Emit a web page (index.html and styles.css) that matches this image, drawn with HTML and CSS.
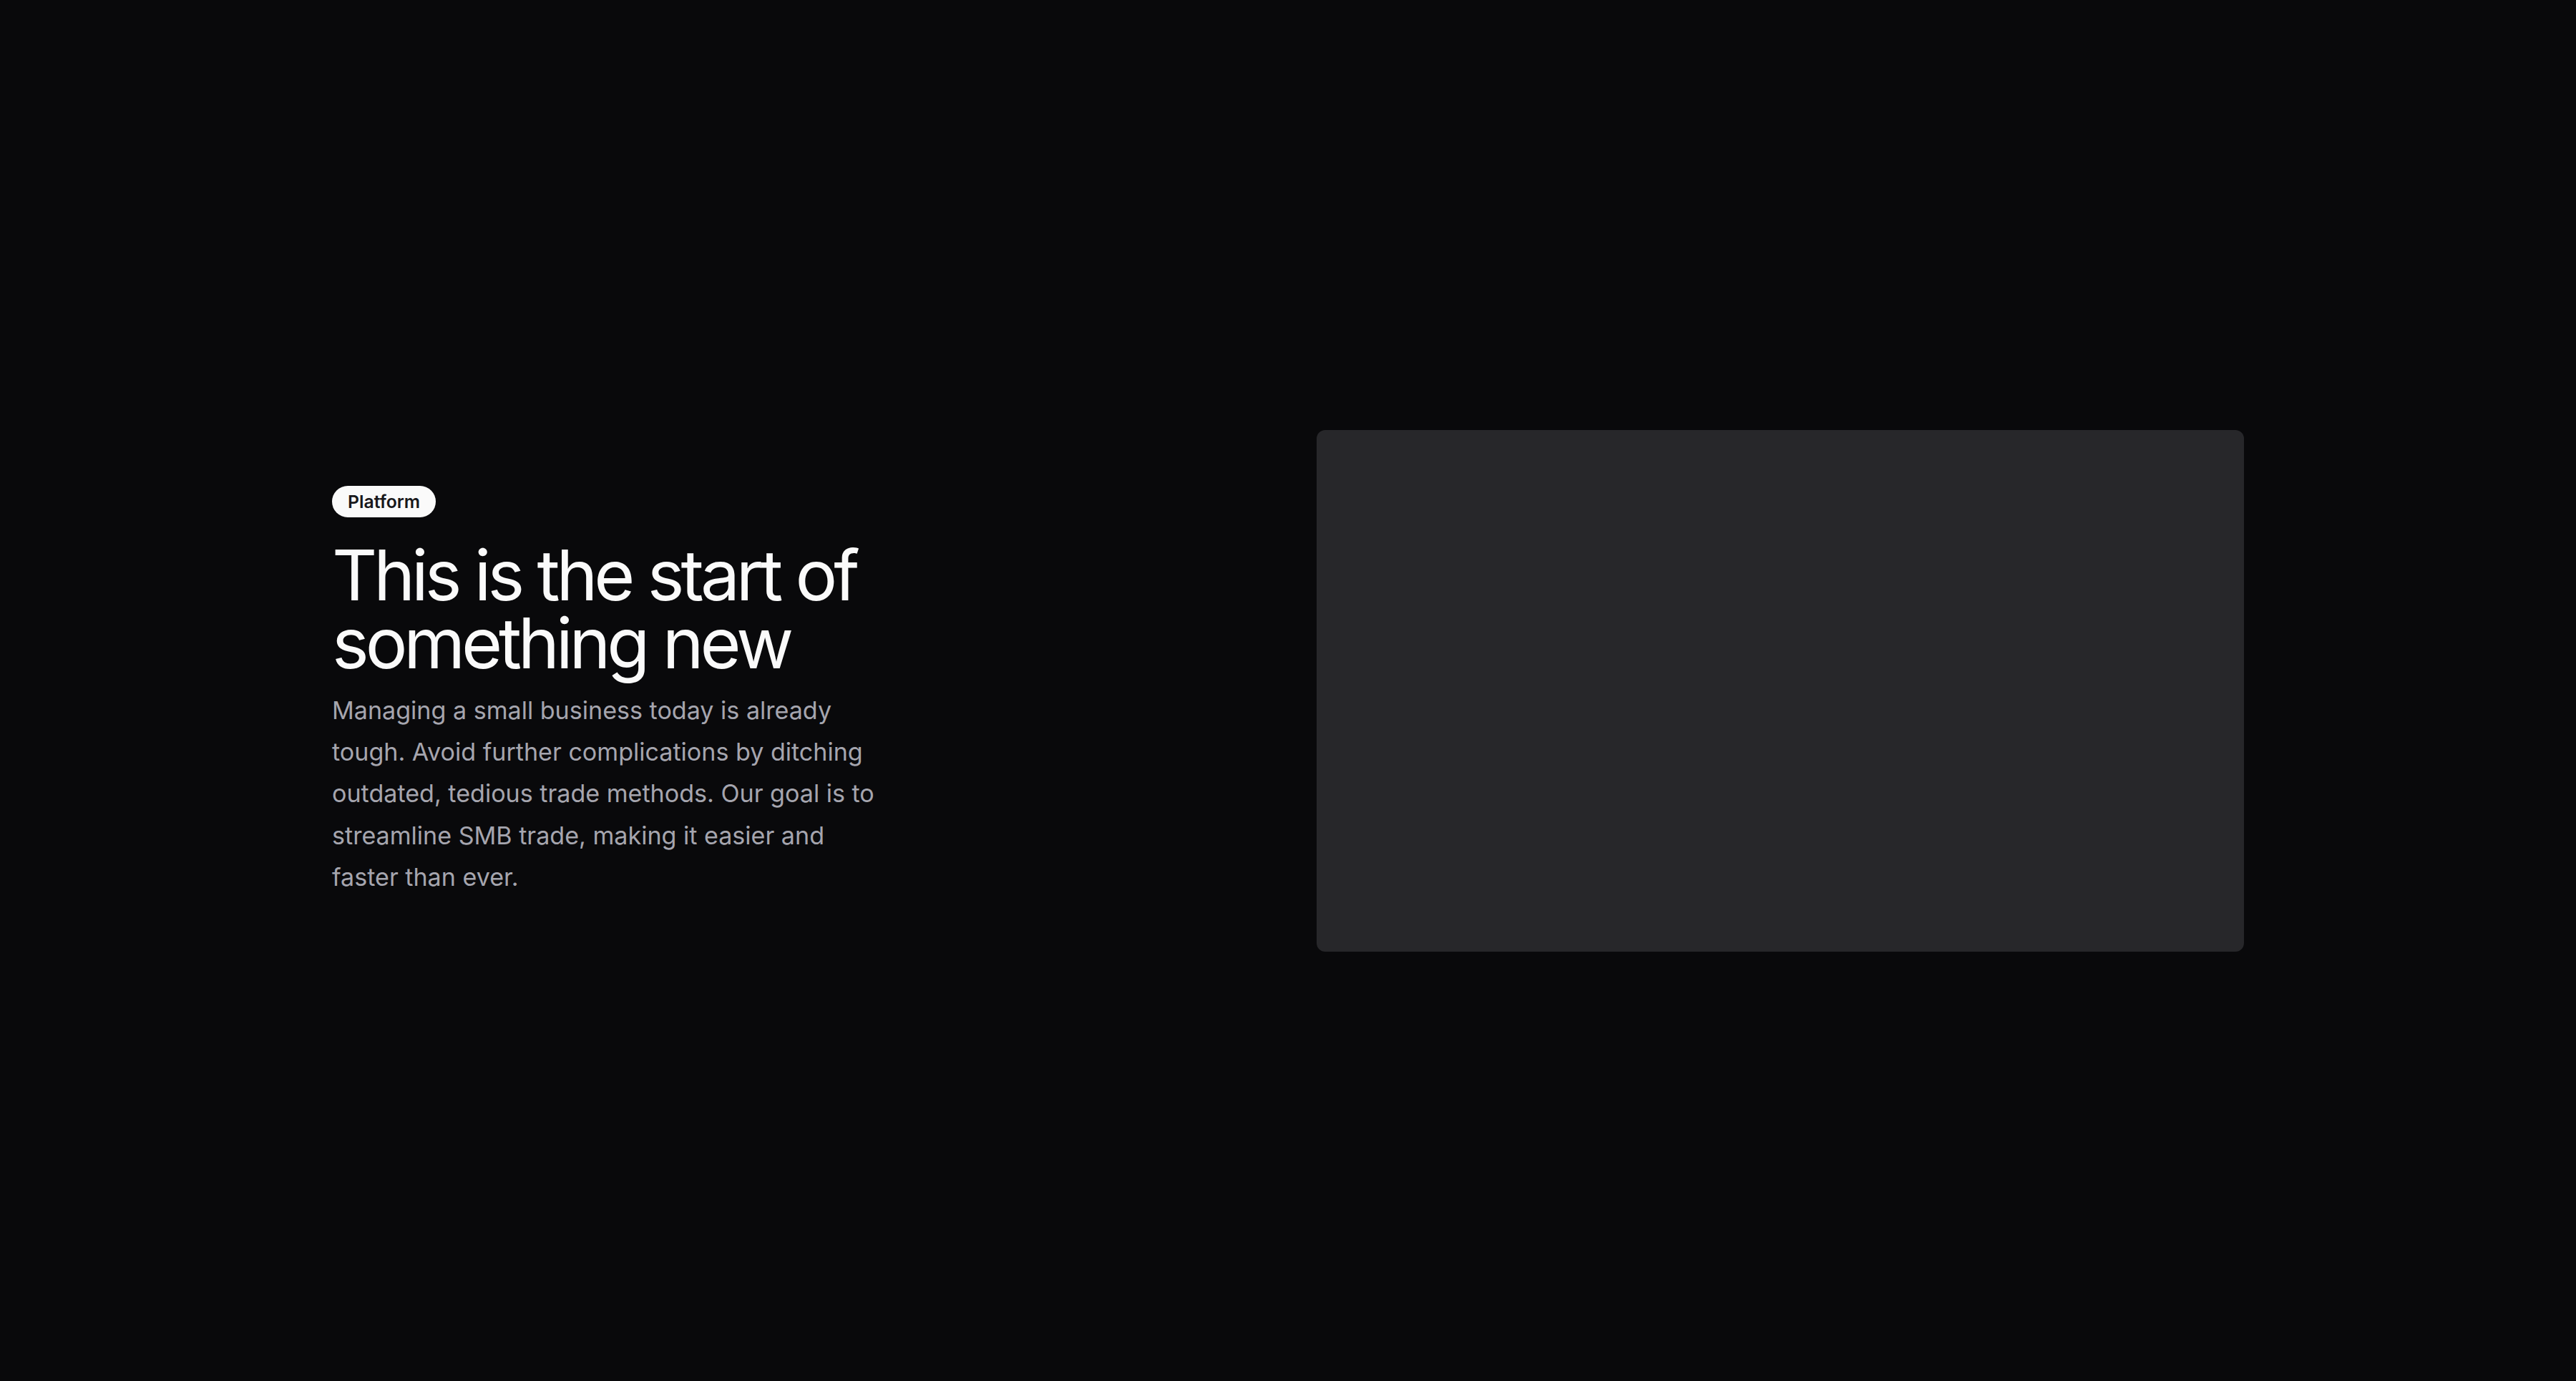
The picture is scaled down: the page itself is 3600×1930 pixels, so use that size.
FILE: index.html
```html
<!DOCTYPE html>
<html lang="en">
<head>
<meta charset="utf-8">
<title>Platform</title>
<link rel="stylesheet" href="styles.css">
</head>
<body>
<main class="page">
  <section class="hero">
    <div class="hero-text">
      <span class="badge">Platform</span>
      <h1 class="title">This is the start of something new</h1>
      <p class="lead">Managing a small business today is already tough. Avoid further complications by ditching outdated, tedious trade methods. Our goal is to streamline SMB trade, making it easier and faster than ever.</p>
    </div>
    <div class="media"></div>
  </section>
</main>
</body>
</html>
```

FILE: styles.css
```css
* { box-sizing: border-box; }
html, body { margin: 0; padding: 0; }
body {
  background: #09090b;
  font-family: Inter, "Noto Sans", "Liberation Sans", sans-serif;
  color: #fafafa;
}
.page {
  min-height: 100vh;
  display: flex;
  align-items: center;
  justify-content: center;
}
.hero {
  width: 2672px;
  display: grid;
  grid-template-columns: 1fr 1fr;
  gap: 80px;
  align-items: center;
}
.hero-text {
  display: flex;
  flex-direction: column;
  align-items: flex-start;
  max-width: 780px;
  padding-top: 4px;
}
.badge {
  display: inline-flex;
  align-items: center;
  height: 44px;
  padding: 0 22px;
  border-radius: 999px;
  background: #fafafa;
  color: #18181b;
  font-size: 24.75px;
  font-weight: 600;
}
.title {
  margin: 33px 0 0;
  font-size: 98px;
  line-height: 95px;
  font-weight: 400;
  letter-spacing: -0.052em;
}
.lead {
  margin: 18px 0 0;
  font-size: 34.1px;
  line-height: 58.2px;
  color: #a5a5ae;
}
.media {
  aspect-ratio: 16 / 9;
  background: #27272a;
  border-radius: 12px;
}
```
